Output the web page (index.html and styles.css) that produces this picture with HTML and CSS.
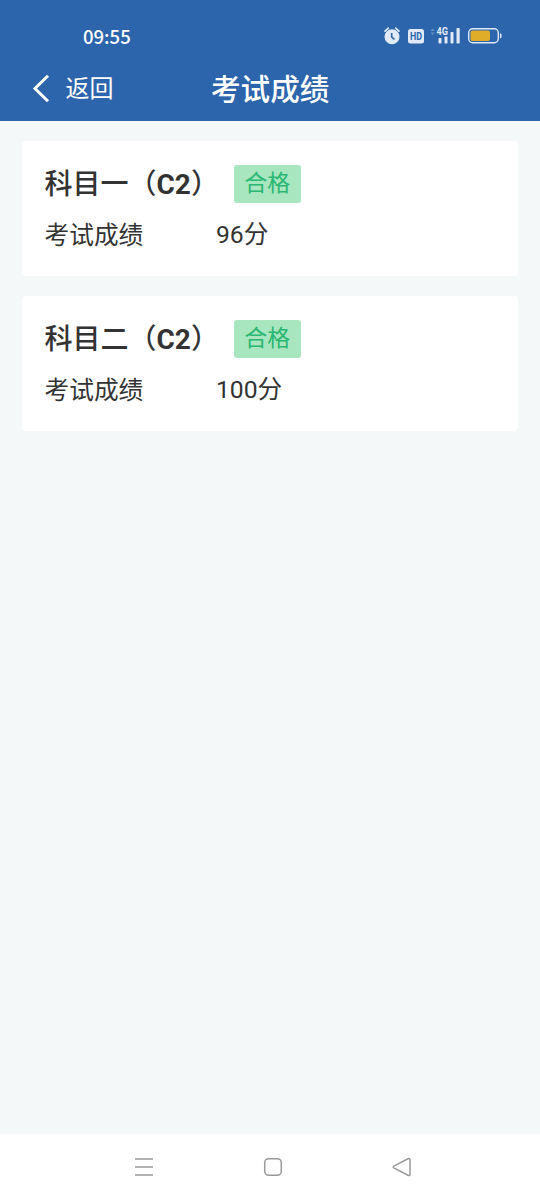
FILE: index.html
```html
<!DOCTYPE html>
<html lang="zh-CN">
<head>
<meta charset="utf-8">
<title>考试成绩</title>
<link rel="stylesheet" href="styles.css">
</head>
<body>
<header class="header">
  <div class="status">
    <span class="clock">09:55</span>
    <svg class="status-icons" width="120" height="20" viewBox="0 0 120 20">
      <g fill="#e2eaf8">
        <circle cx="9" cy="10.8" r="7.5"/>
        <path d="M2 5.2 5.3 2.2M16 5.2 12.7 2.2" stroke="#e2eaf8" stroke-width="1.7" stroke-linecap="round"/>
        <path d="M8.7 7v4.2l2.8 2.2" fill="none" stroke="#2c65ab" stroke-width="1.6"/>
        <rect x="25" y="3" width="16" height="14.5" rx="2.5"/>
        <rect x="55.5" y="12" width="3" height="5.5" rx=".7"/>
        <rect x="61.5" y="10.5" width="3" height="7" rx=".7"/>
        <rect x="67.5" y="6" width="3" height="11.5" rx=".7"/>
        <rect x="73.5" y="2" width="3.2" height="15.5" rx=".7"/>
        <text class="network" x="53.5" y="9.3" textLength="11.5" lengthAdjust="spacingAndGlyphs">4G</text>
      </g>
      <text class="hd" x="27" y="14.3" textLength="12" lengthAdjust="spacingAndGlyphs">HD</text>
      <path d="m47.500 5 2.200-2.600L52 5zM47.500 6.500l2.200 2.600L52 6.500z" fill="#6690c6"/>
      <rect x="85.7" y="2.7" width="29.6" height="14" rx="4" fill="none" stroke="#dfe9f8" stroke-width="1.4"/>
      <rect x="87.5" y="4.5" width="19.5" height="10.5" rx="2" fill="#dfad27"/>
      <path d="M117 7.3q1.5 0 1.5 1.5v2q0 1.5-1.5 1.5z" fill="#dfe9f8"/>
    </svg>
  </div>
  <nav class="nav">
    <a class="back">
      <svg width="18" height="30" viewBox="0 0 18 30"><path d="M16 1.700 3 14.500l13 12.800" fill="none" stroke="#fff" stroke-width="3"/></svg>
      <span>返回</span>
    </a>
    <h1 class="title">考试成绩</h1>
  </nav>
</header>
<main class="results">
  <section class="card">
    <div class="subject"><h2 class="name">科目一（<b>C2</b>）</h2><span class="badge">合格</span></div>
    <div class="score"><span class="label">考试成绩</span><span class="value">96分</span></div>
  </section>
  <section class="card">
    <div class="subject"><h2 class="name">科目二（<b>C2</b>）</h2><span class="badge">合格</span></div>
    <div class="score"><span class="label">考试成绩</span><span class="value">100分</span></div>
  </section>
</main>
<footer class="system-nav">
  <svg width="20" height="20" viewBox="0 0 20 20"><path d="M1 2h18M1 10h18M1 18h18"/></svg>
  <svg width="20" height="20" viewBox="0 0 20 20"><rect x="1.700" y="1.700" width="16.600" height="16.600" rx="4"/></svg>
  <svg width="20" height="20" viewBox="0 0 20 20"><path d="M2.200 8.800 16 1.800q2-.7 2 1.200v14q0 1.900-2 1.200L2.200 11.200q-2-1.200 0-2.400z"/></svg>
</footer>
</body>
</html>
```
FILE: styles.css
```css
* { box-sizing: border-box; }
body {
  margin: 0;
  height: 1200px;
  display: flex;
  flex-direction: column;
  overflow: hidden;
  background: #f4f8f9;
  color: #333;
  font-family: Roboto, "Noto Sans CJK SC", sans-serif;
}
h1, h2 { margin: 0; }
.header { height: 121px; background: #2c65ab; color: #fff; }
.status {
  height: 56px;
  padding: 17px 37px 0 83px;
  display: flex;
  justify-content: space-between;
}
.clock { font: 500 18.5px/38px "Noto Sans CJK SC", sans-serif; height: 38px; }
.status-icons { margin-top: 9px; }
.network { font: 700 10px Roboto, sans-serif; }
.hd { font: 700 11px Roboto, sans-serif; fill: #2c65ab; }
.nav {
  height: 65px;
  padding: 1px 0 0 32px;
  display: grid;
  grid-template-columns: 179px auto;
  align-items: center;
}
.back { display: flex; align-items: center; gap: 15.5px; font-size: 24px; line-height: 36px; }
.title { padding-top: 1px; font-size: 29.6px; line-height: 44px; font-weight: 500; }
.results { flex: 1; padding: 20px 22px 20px 21.5px; display: flex; flex-direction: column; gap: 20px; }
.card { height: 135px; padding: 23.5px 23px 0; background: #fff; border-radius: 4px; }
.subject { display: flex; gap: 16px; height: 39px; }
.name { width: 173.5px; white-space: nowrap; font-size: 28px; line-height: 39px; font-weight: 500; }
.name b { font-weight: 700; }
.badge {
  width: 66.5px;
  height: 38.5px;
  border-radius: 3px;
  background: #a8e6bf;
  color: #2ab673;
  font-size: 23px;
  line-height: 38px;
  text-align: center;
}
.score { margin-top: 12px; display: grid; grid-template-columns: 171.5px auto; font-size: 24.7px; line-height: 38px; }
.label { padding-top: 1px; }
.system-nav {
  height: 66px;
  padding: 0 128px 0 134px;
  display: flex;
  justify-content: space-between;
  align-items: center;
  background: #fff;
}
.system-nav svg { fill: none; stroke: #999; stroke-width: 1.5; }
```
